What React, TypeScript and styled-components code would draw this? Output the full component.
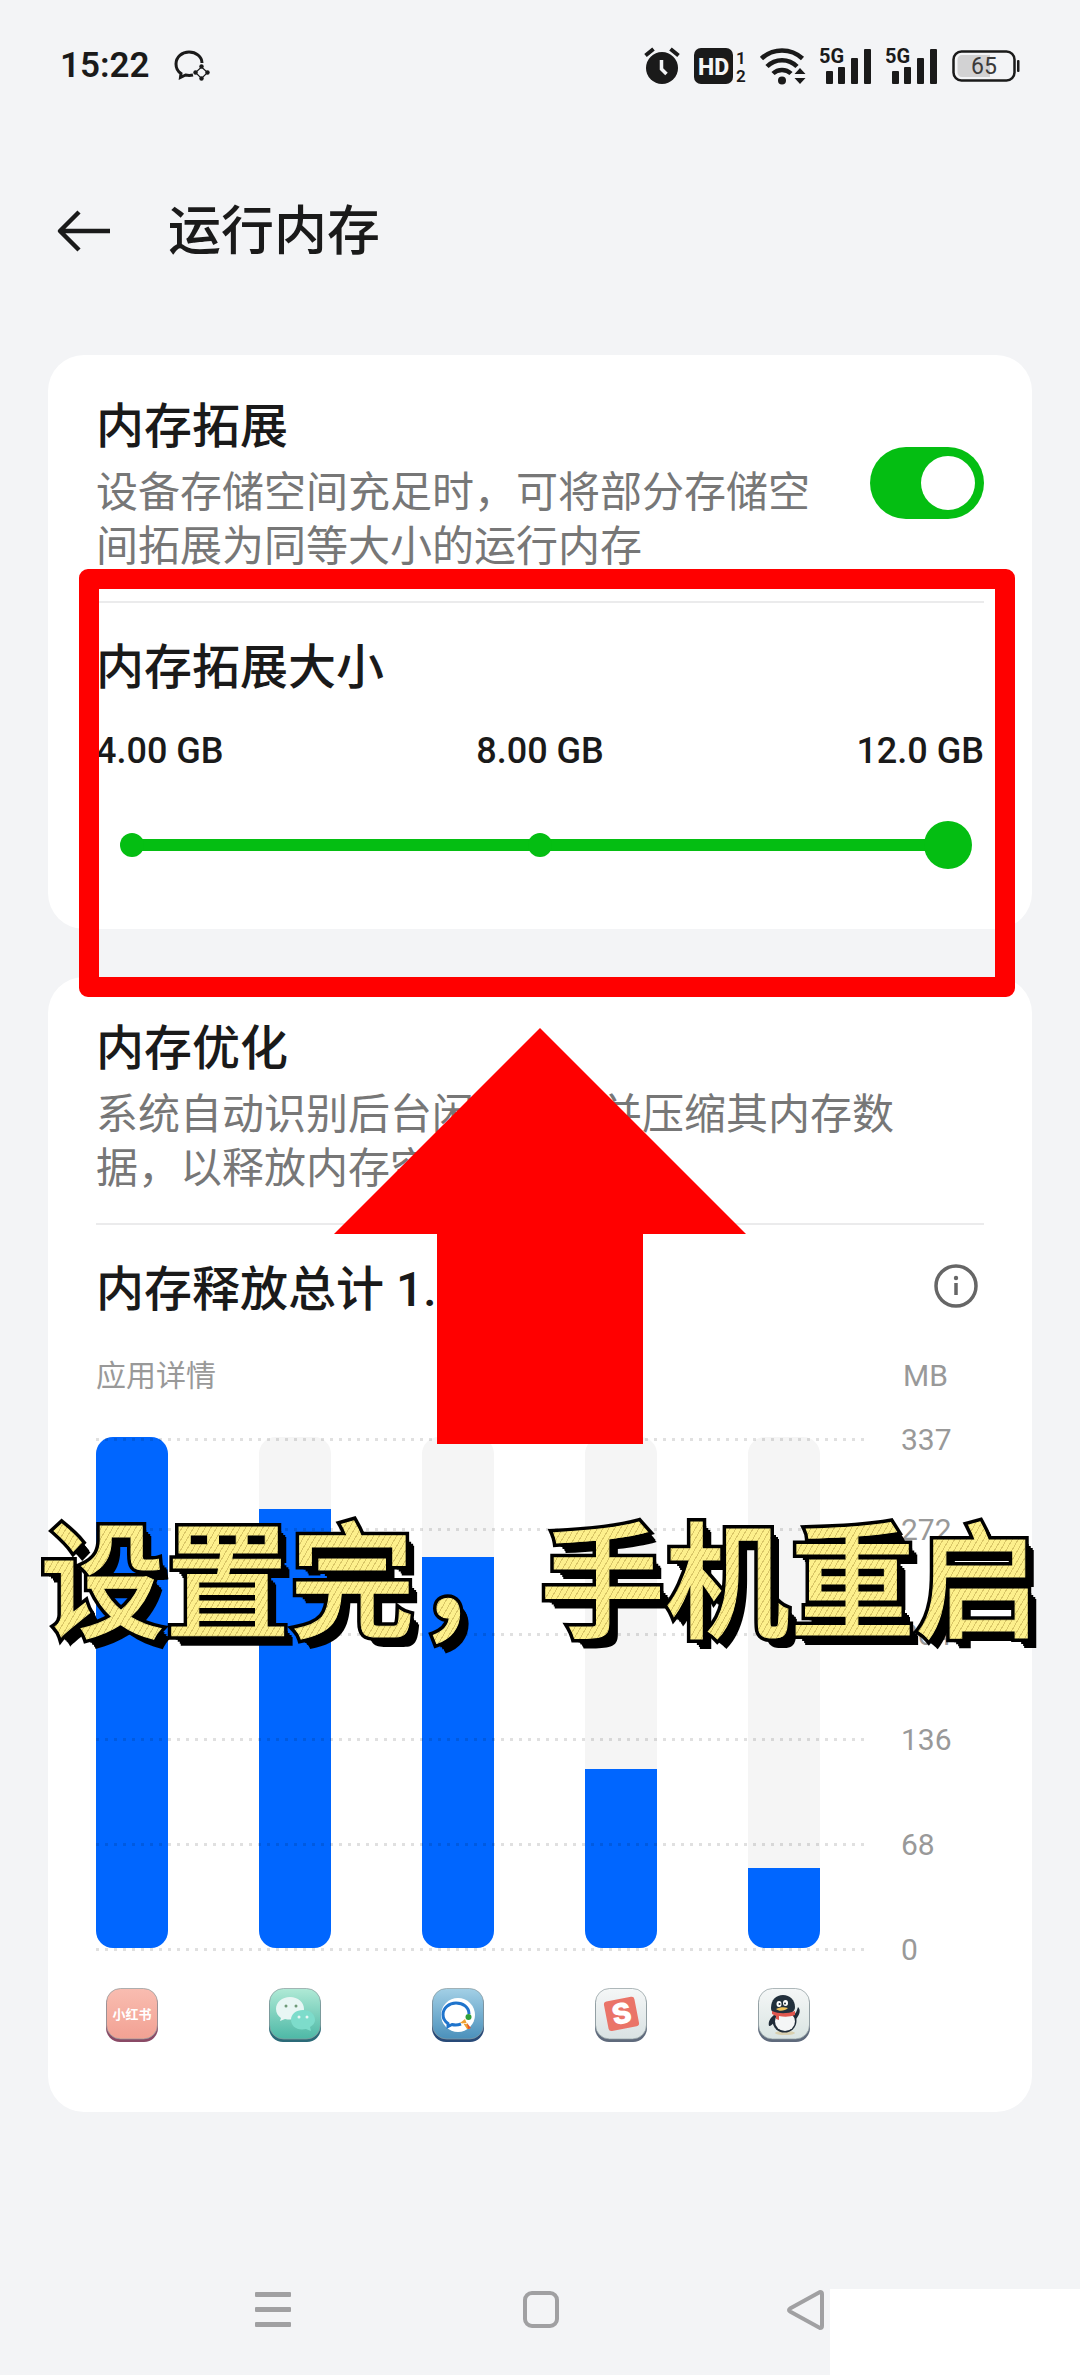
import { useState } from "react";
import styled, { createGlobalStyle } from "styled-components";

const GlobalStyle = createGlobalStyle`
  * {
    box-sizing: border-box;
  }

  body {
    margin: 0;
    background-color: #f3f4f6;
    color: #1a1a1a;
    font-family: Roboto, "Noto Sans CJK SC", sans-serif;
  }

  h1, h2, p, ul {
    margin: 0;
    padding: 0;
  }

  button {
    padding: 0;
    border: 0;
    background: none;
    color: inherit;
    cursor: pointer;
  }

  svg {
    display: block;
  }
`;

const Page = styled.div`
  position: relative;
  display: flex;
  flex-direction: column;
  min-height: 100vh;
  overflow: hidden;
`;

const StatusBar = styled.div`
  display: flex;
  align-items: center;
  justify-content: space-between;
  height: 132px;
  padding: 0 60px;
`;

const StatusGroup = styled.div<{ $gap: number }>`
  display: flex;
  align-items: center;
  gap: ${(props) => props.$gap}px;
`;

const Clock = styled.span`
  font-size: 35px;
  font-weight: 600;
  line-height: 40px;
`;

const Header = styled.header`
  display: flex;
  align-items: center;
  gap: 56px;
  height: 198px;
  padding: 0 56px;
`;

const PageTitle = styled.h1`
  padding-top: 2px;
  font-size: 53px;
  font-weight: 500;
  line-height: 72px;
`;

const Main = styled.main`
  display: flex;
  flex-direction: column;
  gap: 48px;
  padding: 25px 48px 0;
`;

const Card = styled.section<{ $bottom: number }>`
  padding: 36px 48px ${(props) => props.$bottom}px;
  border-radius: 36px;
  background-color: #fff;
`;

const SettingRow = styled.div`
  display: flex;
  align-items: center;
  justify-content: space-between;
  gap: 48px;
`;

const SectionTitle = styled.h2`
  display: block;
  font-size: 48px;
  font-weight: 500;
  line-height: 72px;
`;

const Description = styled.p`
  max-width: 816px;
  margin-top: 3px;
  color: #777;
  font-size: 42px;
  line-height: 54px;
`;

const Divider = styled.hr`
  height: 2px;
  margin: 27px 0 29px;
  border: 0;
  background-color: #ebebec;
`;

const Switch = styled.input`
  flex: none;
  display: flex;
  align-items: center;
  justify-content: flex-end;
  width: 114px;
  height: 72px;
  margin: 0;
  padding: 9px;
  border-radius: 36px;
  background-color: #c8c8c8;
  appearance: none;
  cursor: pointer;

  &::before {
    content: "";
    width: 54px;
    height: 54px;
    border-radius: 50%;
    background-color: #fff;
  }

  &:checked {
    background-color: #04be12;
  }

  &:not(:checked) {
    justify-content: flex-start;
  }
`;

const SizeLabels = styled.div`
  display: flex;
  justify-content: space-between;
  margin-top: 27px;
  font-size: 36px;
  font-weight: 500;
  line-height: 40px;
`;

const SliderBox = styled.div`
  display: grid;
  align-items: center;
  margin: 50px 12px 0;

  > * {
    grid-area: 1 / 1;
  }
`;

const SliderStops = styled.div`
  display: flex;
  align-items: center;
  justify-content: space-between;
  margin: 0 12px;
  background: linear-gradient(#04be12, #04be12) center / calc(100% - 24px) 12px no-repeat;

  span {
    width: 24px;
    height: 24px;
    border-radius: 50%;
    background-color: #04be12;
  }
`;

const SliderInput = styled.input`
  width: 100%;
  height: 48px;
  margin: 0;
  background: none;
  appearance: none;
  cursor: pointer;

  &::-webkit-slider-thumb {
    width: 48px;
    height: 48px;
    border: 0;
    border-radius: 50%;
    background-color: #04be12;
    appearance: none;
  }
`;

const InfoButton = styled.button`
  padding: 0 5px 8px;
  color: #666;
`;

const ChartHead = styled.div`
  display: grid;
  grid-template-columns: 1fr 81px;
  margin-top: 30px;
  color: #999;
  font-size: 30px;
  line-height: 40px;
`;

const Plot = styled.div`
  display: grid;
  margin-top: 25px;

  > * {
    grid-area: 1 / 1;
  }
`;

const Bars = styled.div`
  display: flex;
  justify-content: space-between;
  margin-right: 164px;
  padding: 16px 0 19px;
`;

const BarTrack = styled.div`
  display: flex;
  align-items: flex-end;
  width: 72px;
  border-radius: 17px;
  background-color: #f5f5f5;
  overflow: hidden;
`;

const BarFill = styled.div`
  width: 100%;
  background-color: #0066ff;
`;

const GridLines = styled.ul`
  list-style-type: none;
`;

const GridLine = styled.li<{ $space: number }>`
  display: grid;
  grid-template-columns: 1fr 83px;
  align-items: center;
  height: 36px;
  margin-bottom: ${(props) => props.$space}px;
  color: #999;
  font-size: 30px;

  &::before {
    content: "";
    height: 3px;
    margin-right: 37px;
    background: repeating-linear-gradient(90deg, rgba(0, 0, 0, 0.12) 0 3px, transparent 3px 9px);
  }
`;

const AppRow = styled.div`
  display: flex;
  justify-content: space-between;
  margin: 21px 164px 0 0;
  padding: 0 10px;
`;

const NavBar = styled.nav`
  display: flex;
  justify-content: space-between;
  align-items: center;
  height: 130px;
  margin-top: auto;
  padding: 0 254px;
  color: #a0a0a2;
`;

const CornerPatch = styled.div`
  position: absolute;
  right: 0;
  bottom: 0;
  width: 250px;
  height: 86px;
  background-color: #fff;
`;

const Highlight = styled.div`
  position: absolute;
  top: 569px;
  left: 79px;
  right: 65px;
  height: 428px;
  border: 20px solid #f00;
  border-radius: 9px;
  pointer-events: none;
`;

const ArrowOverlay = styled.svg`
  position: absolute;
  top: 1028px;
  left: 50%;
  transform: translateX(-50%);
  pointer-events: none;
`;

const Caption = styled.p`
  position: absolute;
  top: 1484px;
  left: 0;
  right: 0;
  color: #000;
  font-family: "Noto Sans CJK SC", sans-serif;
  font-size: 125px;
  font-weight: 500;
  line-height: 180px;
  text-align: center;
  white-space: nowrap;
  pointer-events: none;
  -webkit-text-stroke: 8px #000;
  stroke-linejoin: round;
  text-shadow: 2px 2px 0 #000, 4px 4px 0 #000, 6px 6px 0 #000, 8px 8px 0 #000, 9px 10px 0 #000;

  &::after {
    content: attr(data-text);
    position: absolute;
    inset: 0;
    background: repeating-linear-gradient(120deg, #fdf08c 0 4px, #d9c668 4px 5px);
    background-clip: text;
    color: transparent;
    text-shadow: none;
    -webkit-text-stroke: 1px transparent;
  }
`;

function ChatIcon() {
  return (
    <svg width="38" height="32" viewBox="0 0 38 32" fill="none" stroke="#1a1a1a">
      <path d="M28 13C28 6.500 22 2 15 2S2 7 2 14c0 4 2 7.500 5 9.500L6.500 27.500l5-2.500c2.500.6 5 .6 7.500 0" strokeWidth="3" />
      <path d="M27.500 17l6 5.500-6 6-6-6z" strokeWidth="1.200" />
      <g fill="#1a1a1a" stroke="none">
        <circle cx="27.500" cy="16.500" r="2.200" />
        <circle cx="33.500" cy="22.500" r="2.200" />
        <circle cx="27.500" cy="28.500" r="2.200" />
        <circle cx="21.500" cy="22.500" r="2.200" />
      </g>
    </svg>
  );
}

function AlarmIcon() {
  return (
    <svg width="36" height="38" viewBox="0 0 36 38" fill="none">
      <circle cx="18" cy="21" r="16" fill="#1a1a1a" />
      <path d="M1.500 8.500l8-6.500M34.500 8.500l-8-6.500" stroke="#1a1a1a" strokeWidth="4" />
      <path d="M17.500 13v9l5 5" stroke="#f3f4f6" strokeWidth="3.500" />
    </svg>
  );
}

function HdIcon() {
  return (
    <svg width="52" height="38" viewBox="0 0 52 38" fontFamily="Roboto, sans-serif" fill="#1a1a1a">
      <rect x="0" y="1" width="39" height="36" rx="7" />
      <text x="19.500" y="27.500" fontSize="23" fontWeight="800" textAnchor="middle" fill="#f3f4f6">HD</text>
      <text x="42" y="17" fontSize="17" fontWeight="600">1</text>
      <text x="42" y="35" fontSize="17" fontWeight="600">2</text>
    </svg>
  );
}

function WifiIcon() {
  return (
    <svg width="46" height="38" viewBox="0 0 46 38" fill="none" stroke="#1a1a1a" strokeWidth="4.500">
      <path d="M1.500 11.500a30 30 0 0 1 41 0M7 19.500a21 21 0 0 1 30 0M13 26.500a13 13 0 0 1 18 0" />
      <circle cx="22" cy="33.500" r="4" fill="#1a1a1a" stroke="none" />
      <path d="M34.500 27l5.500-6 5.500 6zM34.500 31l5.500 6 5.500-6z" fill="#1a1a1a" stroke="none" />
    </svg>
  );
}

function SignalIcon() {
  return (
    <svg width="52" height="46" viewBox="0 -4 52 46" fill="#1a1a1a">
      <text x="-1" y="16" fontSize="20" fontWeight="700" fontFamily="'Liberation Sans Narrow', Roboto, sans-serif">5G</text>
      <rect x="6" y="24" width="7" height="13" rx="1" />
      <rect x="18" y="20" width="7" height="17" rx="1" />
      <rect x="31" y="11" width="7" height="26" rx="1" />
      <rect x="44" y="2" width="7" height="35" rx="1" />
    </svg>
  );
}

function BatteryIcon() {
  return (
    <svg width="68" height="34" viewBox="0 0 68 34">
      <rect x="1.500" y="2.500" width="61" height="29" rx="8" fill="none" stroke="#1a1a1a" strokeWidth="2.500" />
      <path d="M10 6h28v22H10a4.500 4.500 0 0 1-4.500-4.500v-13A4.500 4.500 0 0 1 10 6z" fill="#d2d2d3" />
      <text x="32" y="25" fontSize="23" textAnchor="middle" fill="#3a3a3a" fontFamily="Roboto, sans-serif">65</text>
      <rect x="65" y="11" width="2.500" height="12" rx="1" fill="#1a1a1a" />
    </svg>
  );
}

function IconTile({ id, top, bottom, edge, children }: {
  id: string;
  top: string;
  bottom: string;
  edge: string;
  children: React.ReactNode;
}) {
  return (
    <svg width="52" height="54" viewBox="0 0 52 54">
      <defs>
        <linearGradient id={id} x1="0" y1="0" x2="0" y2="1">
          <stop offset="0" stopColor={top} />
          <stop offset="1" stopColor={bottom} />
        </linearGradient>
      </defs>
      <rect x="0" y="3" width="52" height="51" rx="14" fill={edge} />
      <rect x="0.500" y="0.500" width="51" height="50.500" rx="14" fill={`url(#${id})`} stroke="#8c9a9c" strokeOpacity="0.700" />
      {children}
    </svg>
  );
}

function XiaohongshuIcon() {
  return (
    <IconTile id="xhs" top="#f9bdb1" bottom="#f2a193" edge="#8a4a66">
      <text x="26" y="31" fontSize="13" fontWeight="700" textAnchor="middle" fill="#fff" fontFamily="'Noto Sans CJK SC', sans-serif">
        小红书
      </text>
    </IconTile>
  );
}

function WechatIcon() {
  return (
    <IconTile id="wechat" top="#b0ead6" bottom="#4db8a6" edge="#2b6a78">
      <path d="M21 9c-8 0-14 5-14 12 0 4 2 7 5 9l-1 3 5-2c10 2 19-2 19-10 0-7-6-12-14-12z" fill="#e8f6f4" />
      <path d="M34 22c-7 0-12 4-12 10s6 11 15 9l5 2-1-4c3-2 5-4 5-7 0-6-5-10-12-10z" fill="#7ddccb" />
      <g fill="#6f9a78">
        <circle cx="17" cy="18" r="1.500" />
        <circle cx="27" cy="18" r="1.500" />
      </g>
      <g fill="#e8f6f4">
        <circle cx="30" cy="29" r="1.500" />
        <circle cx="38" cy="29" r="1.500" />
      </g>
    </IconTile>
  );
}

function WecomIcon() {
  return (
    <IconTile id="wecom" top="#a3d0e6" bottom="#4a90bb" edge="#284a78">
      <circle cx="26" cy="27" r="17" fill="#fff" />
      <path d="M37 26C37 19 31 15 24 15S11 20 11 26.500c0 4 2 7 5 9l0 3 4-2c3 .8 6 .6 9-.5" fill="none" stroke="#1f74cc" strokeWidth="3" />
      <circle cx="36.500" cy="29" r="3" fill="#2f9e3a" />
      <path d="M28 35l5-4 2 5zM31 35l4 6 3 0-3-6z" fill="#f0a030" />
      <path d="M35 35l4 5-3 1z" fill="#e4572e" />
    </IconTile>
  );
}

function SogouIcon() {
  return (
    <IconTile id="sogou" top="#f5f7f7" bottom="#d9e2e3" edge="#5f6a7c">
      <g transform="rotate(-11 26 26)">
        <rect x="11" y="11" width="31" height="30" rx="3" fill="#ea7468" />
        <text x="26.500" y="36" fontSize="29" fontWeight="900" textAnchor="middle" fill="#fff" fontFamily="Inter, Roboto, sans-serif">S</text>
      </g>
    </IconTile>
  );
}

function QqIcon() {
  return (
    <IconTile id="qq" top="#f5f7f7" bottom="#d9e4e2" edge="#5f6a7c">
      <ellipse cx="27" cy="45" rx="10" ry="2" fill="#d8cfae" />
      <path d="M16 27c-4 3-6 7-5 11 2 0 4-2 5-4zM36 27c2-2 3-5 4-8 3 3 2 8-3 13z" fill="#1f2c38" />
      <ellipse cx="26.500" cy="33" rx="12" ry="11.500" fill="#1f2c38" />
      <ellipse cx="27" cy="33.500" rx="10" ry="9.500" fill="#f4f6f6" />
      <path d="M13 20C13 12 18 7 25 7s12 5 12 12c0 4-3 7-12 7s-12-2-12-6z" fill="#22303c" />
      <path d="M14 23c7 3 15 3 23 0v4c-5 2-11 2-16 1v4l-3-1v-3l-4-2z" fill="#e0574e" />
      <ellipse cx="21" cy="16" rx="2.500" ry="3" fill="#fff" />
      <ellipse cx="27.500" cy="15" rx="2.500" ry="3" fill="#fff" />
      <circle cx="21.500" cy="16" r="1" fill="#22303c" />
      <circle cx="27" cy="15.500" r="1" fill="#22303c" />
      <path d="M18 21c4-2 8-2 12-1-3 3-9 4-12 1z" fill="#f0c25a" />
    </IconTile>
  );
}

const gridLines = [
  { label: "337", space: 54 },
  { label: "272", space: 69 },
  { label: "204", space: 69 },
  { label: "136", space: 69 },
  { label: "68", space: 69 },
  { label: "0", space: 0 },
];

const bars = [
  { name: "小红书", share: 100 },
  { name: "微信", share: 86 },
  { name: "企业微信", share: 76.5 },
  { name: "搜狗输入法", share: 35 },
  { name: "QQ", share: 15.7 },
];

const sizes = ["4.00 GB", "8.00 GB", "12.0 GB"];

export default function App() {
  const [expanded, setExpanded] = useState(true);
  const [size, setSize] = useState(2);

  return (
    <>
      <GlobalStyle />
      <Page>
        <StatusBar>
          <StatusGroup $gap={24}>
            <Clock>15:22</Clock>
            <ChatIcon />
          </StatusGroup>
          <StatusGroup $gap={14}>
            <AlarmIcon />
            <HdIcon />
            <WifiIcon />
            <SignalIcon />
            <SignalIcon />
            <BatteryIcon />
          </StatusGroup>
        </StatusBar>

        <Header>
          <button type="button" aria-label="返回">
            <svg width="56" height="44" viewBox="0 0 56 44" fill="none" stroke="#1a1a1a" strokeWidth="4.500">
              <path d="M23 3L4 22l19 19M4 22h50" strokeLinejoin="round" />
            </svg>
          </button>
          <PageTitle>运行内存</PageTitle>
        </Header>

        <Main>
          <Card $bottom={60}>
            <SettingRow>
              <div>
                <SectionTitle as="label" htmlFor="expand">内存拓展</SectionTitle>
                <Description>设备存储空间充足时，可将部分存储空间拓展为同等大小的运行内存</Description>
              </div>
              <Switch
                id="expand"
                type="checkbox"
                role="switch"
                checked={expanded}
                onChange={(e) => setExpanded(e.target.checked)}
              />
            </SettingRow>
            <Divider />
            <SectionTitle id="size-title">内存拓展大小</SectionTitle>
            <SizeLabels>
              {sizes.map((item) => (
                <span key={item}>{item}</span>
              ))}
            </SizeLabels>
            <SliderBox>
              <SliderStops>
                {sizes.map((item) => (
                  <span key={item} />
                ))}
              </SliderStops>
              <SliderInput
                type="range"
                min={0}
                max={2}
                step={1}
                value={size}
                aria-labelledby="size-title"
                onChange={(e) => setSize(Number(e.target.value))}
              />
            </SliderBox>
          </Card>

          <Card $bottom={70}>
            <SectionTitle>内存优化</SectionTitle>
            <Description>系统自动识别后台闲置应用并压缩其内存数据，以释放内存空间</Description>
            <Divider />
            <SettingRow>
              <SectionTitle>内存释放总计 1.05 GB</SectionTitle>
              <InfoButton type="button" aria-label="说明">
                <svg width="46" height="46" viewBox="0 0 46 46" fill="none" stroke="currentColor" strokeWidth="3.500">
                  <circle cx="23" cy="23" r="20" />
                  <path d="M23 20v12" />
                  <circle cx="23" cy="15" r="2.200" fill="currentColor" stroke="none" />
                </svg>
              </InfoButton>
            </SettingRow>
            <ChartHead>
              <span>应用详情</span>
              <span>MB</span>
            </ChartHead>
            <Plot>
              <Bars>
                {bars.map((bar) => (
                  <BarTrack key={bar.name}>
                    <BarFill style={{ height: `${bar.share}%` }} />
                  </BarTrack>
                ))}
              </Bars>
              <GridLines>
                {gridLines.map((line) => (
                  <GridLine key={line.label} $space={line.space}>
                    {line.label}
                  </GridLine>
                ))}
              </GridLines>
            </Plot>
            <AppRow>
              <XiaohongshuIcon />
              <WechatIcon />
              <WecomIcon />
              <SogouIcon />
              <QqIcon />
            </AppRow>
          </Card>
        </Main>

        <NavBar>
          <button type="button" aria-label="最近任务">
            <svg width="40" height="38" viewBox="0 0 40 38" fill="currentColor">
              <rect x="1" y="1" width="36" height="5" rx="1" />
              <rect x="1" y="16" width="36" height="5" rx="1" />
              <rect x="1" y="31" width="36" height="5" rx="1" />
            </svg>
          </button>
          <button type="button" aria-label="主屏幕">
            <svg width="40" height="38" viewBox="0 0 40 38" fill="none" stroke="currentColor" strokeWidth="4">
              <rect x="5" y="2" width="32" height="33" rx="7" />
            </svg>
          </button>
          <button type="button" aria-label="返回上一级">
            <svg width="40" height="42" viewBox="0 0 40 42" fill="none" stroke="currentColor" strokeWidth="4" strokeLinejoin="round">
              <path d="M34 3L4 19.500q-2 1.500 0 3L34 39q2 0 2-2V5q0-2-2-2z" />
            </svg>
          </button>
        </NavBar>

        <Highlight />
        <ArrowOverlay width="412" height="416" viewBox="0 0 412 416">
          <path d="M206 0L412 206H309V416H103V206H0z" fill="#f00" />
        </ArrowOverlay>
        <Caption data-text="设置完，手机重启">设置完，手机重启</Caption>
        <CornerPatch />
      </Page>
    </>
  );
}
